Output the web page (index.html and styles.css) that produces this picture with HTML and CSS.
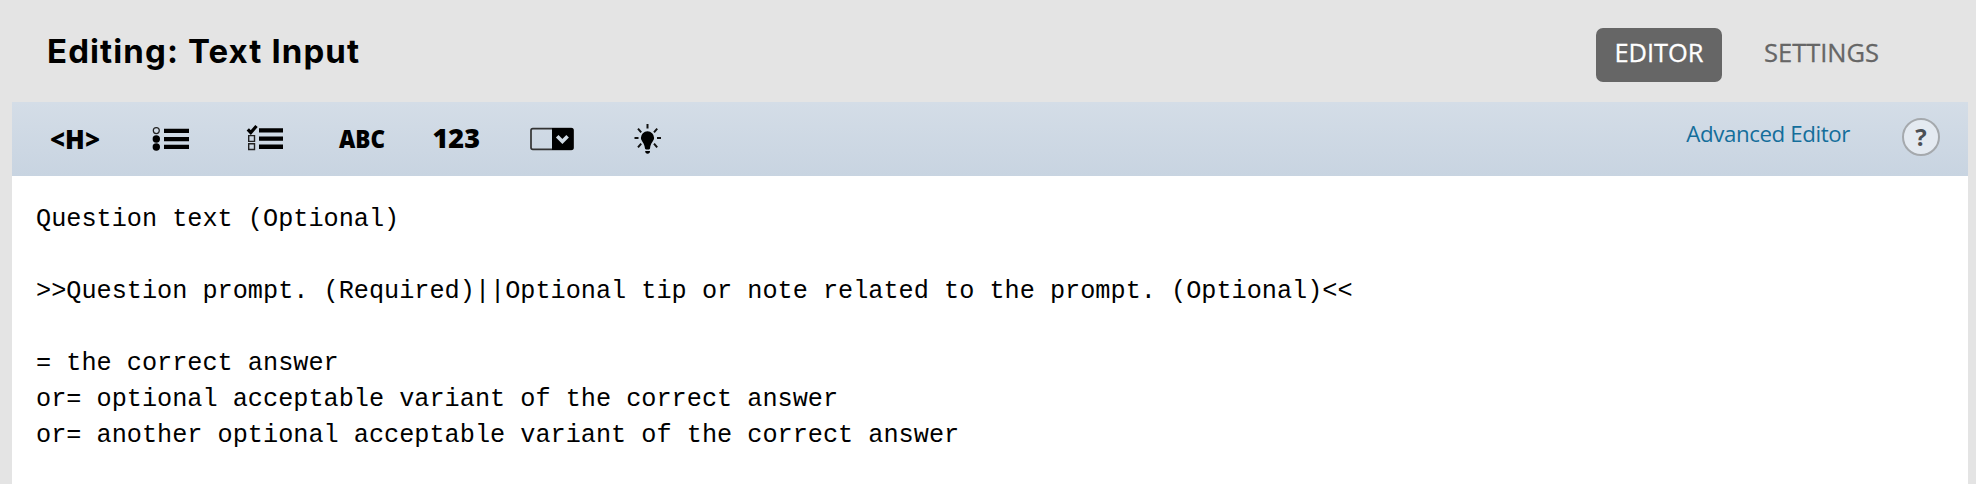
FILE: index.html
```html
<!DOCTYPE html>
<html lang="en">
<head>
<meta charset="utf-8">
<title>Editing: Text Input</title>
<link rel="stylesheet" href="styles.css">
</head>
<body>
<header class="header">
  <h1 class="title">Editing: Text Input</h1>
  <nav class="tabs">
    <a class="tab tab-active"><svg width="88" height="54"><text x="-2.5" y="34" textLength="89" lengthAdjust="spacingAndGlyphs">EDITOR</text></svg></a>
    <a class="tab"><svg width="116" height="54"><text x="0" y="34" textLength="115" lengthAdjust="spacingAndGlyphs">SETTINGS</text></svg></a>
  </nav>
</header>
<main class="panel">
  <div class="toolbar">
    <div class="tools">
      <svg class="tool" viewBox="0 0 60 60"><text class="glyph" x="8" y="38.5" font-size="27" textLength="50" lengthAdjust="spacingAndGlyphs">&lt;H&gt;</text></svg>
      <svg class="tool" viewBox="0 0 60 60">
        <circle cx="19.3" cy="20.6" r="3" fill="none" stroke="#222" stroke-width="1.2"/>
        <circle cx="19.3" cy="29" r="3.7"/><circle cx="19.3" cy="37" r="3.7"/>
        <path d="M27 18.7h25v4.3H27zM27 27h25v4.3H27zM27 34.7h25v4.3H27z"/>
      </svg>
      <svg class="tool" viewBox="0 0 60 60">
        <path d="M15.8 19.3l3 3.2 5.7-6.5" fill="none" stroke="#000" stroke-width="3.2"/>
        <path d="M16.7 25.6h5.8v5.8h-5.8zM16.7 33.7h5.8v5.8h-5.8z" fill="none" stroke="#222" stroke-width="1.4"/>
        <path d="M27 18.3h24v4.3H27zM27 26.5h24v4.3H27zM27 34.6h24v4.3H27z"/>
      </svg>
      <svg class="tool" viewBox="0 0 60 60"><text class="glyph" x="12" y="37.6" font-size="25.5" textLength="46" lengthAdjust="spacingAndGlyphs">ABC</text></svg>
      <svg class="tool" viewBox="0 0 60 60"><text class="glyph" x="10.5" y="38.4" font-size="27" textLength="47.500" lengthAdjust="spacingAndGlyphs">123</text></svg>
      <svg class="tool" viewBox="0 0 60 60">
        <rect x="14" y="18.6" width="42" height="20.8" rx="1.8" fill="none" stroke="#333" stroke-width="1.7"/>
        <path d="M35 18h19.5q2 0 2 2v18q0 2-2 2H35z"/>
        <path d="M40.2 26.2l5.2 5.3 5.2-5.3" fill="none" stroke="#d0dae4" stroke-width="3.6"/>
      </svg>
      <svg class="tool" viewBox="0 0 60 60">
        <path d="M35.5 21.2a6.6 6.6 0 0 1 6.6 6.6c0 3.2-3.6 5.200-4 10.200q0 1.400-1.200 1.400h-2.800q-1.200 0-1.200-1.400c-.4-5-4-7-4-10.200a6.600 6.600 0 0 1 6.600-6.600z"/>
        <path d="M33.200 41h4.800q0 2.800-2.400 2.800t-2.400-2.800z"/>
        <path d="M35.500 14v4.500M22.500 28h4M45 28h4M26 18.700l3.200 3.600M45.200 18.700L42 22.300M26 37.300l3.200-3.600M45.200 37.300L42 33.700" stroke="#111" stroke-width="2"/>
      </svg>
    </div>
    <a class="advanced">Advanced Editor</a>
    <span class="help">?</span>
  </div>
  <pre class="editor">Question text (Optional)

&gt;&gt;Question prompt. (Required)||Optional tip or note related to the prompt. (Optional)&lt;&lt;

= the correct answer
or= optional acceptable variant of the correct answer
or= another optional acceptable variant of the correct answer</pre>
</main>
</body>
</html>
```
FILE: styles.css
```css
body {
  margin: 0;
  height: 484px;
  display: flex;
  flex-direction: column;
  overflow: hidden;
  background: #e4e4e4;
  color: #000;
  font-family: "Open Sans", sans-serif;
}
.header {
  height: 102px;
  flex: none;
  box-sizing: border-box;
  padding: 28px 78px 0 47px;
  display: flex;
  justify-content: space-between;
  align-items: flex-start;
}
.title {
  margin: 0;
  font: 700 33px/46px Inter, sans-serif;
  letter-spacing: 1.1px;
  white-space: nowrap;
}
.tabs { display: flex; gap: 21px; }
.tab {
  display: flex;
  height: 54px;
  padding: 0 17px 0 21px;
  border-radius: 7px;
  font-size: 26px;
}
.tab:last-child { padding-right: 18px; }
.tab svg { fill: #666; stroke: #666; stroke-width: 0.3px; overflow: visible; }
.tab-active { background: #666; }
.tab-active svg { fill: #fff; stroke: #fff; }
.panel {
  flex: 1;
  margin: 0 8px 0 12px;
  background: #fff;
}
.toolbar {
  height: 74px;
  display: flex;
  align-items: flex-start;
  box-sizing: border-box;
  padding: 8px 28px 0 30px;
  background: linear-gradient(#d4dde7, #c8d4e1);
}
.tools { display: flex; gap: 35px; margin-right: auto; }
.tool { width: 60px; height: 60px; overflow: visible; }
.glyph { font-family: "Open Sans", sans-serif; font-weight: 800; }
.advanced {
  font-size: 22.3px;
  letter-spacing: -0.4px;
  line-height: 48px;
  margin-right: 52px;
  color: #146e9b;
  white-space: nowrap;
}
.help {
  width: 38px;
  height: 38px;
  margin-top: 8px;
  box-sizing: border-box;
  border: 2px solid #a5a9ad;
  border-radius: 50%;
  background: #e4eaf1;
  color: #4c5055;
  font-size: 24px;
  font-weight: 700;
  line-height: 33px;
  text-align: center;
}
.editor {
  margin: 0;
  padding: 26px 24px 0;
  font: 25.22px/36px "Courier New", "Liberation Mono", monospace;
}
```
